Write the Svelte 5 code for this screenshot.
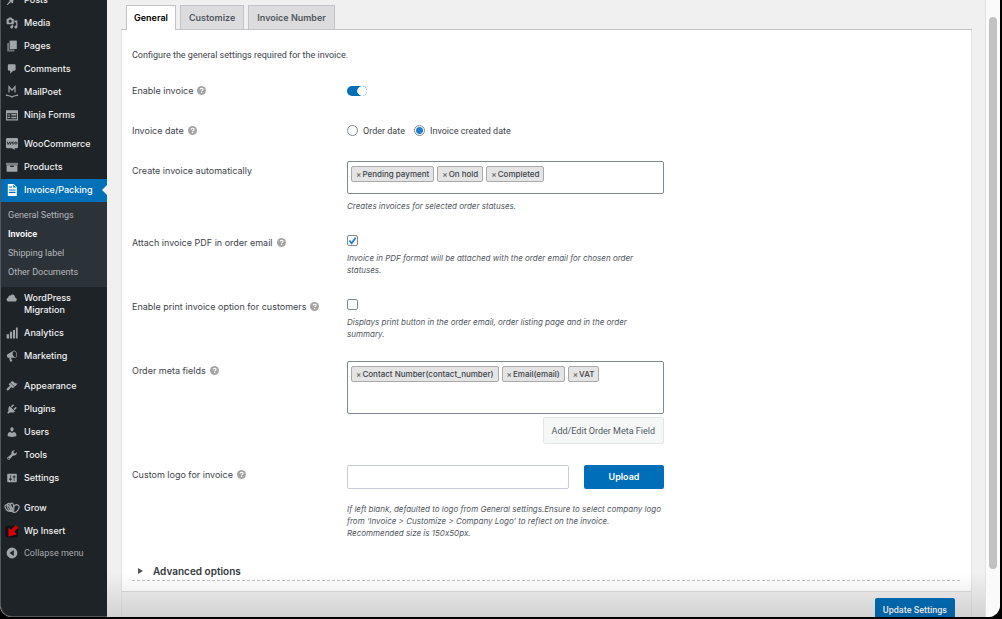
<script>
  const icons = {
    posts: 'M10.44 3.02l1.82-1.82 6.36 6.35-1.83 1.82c-1.05-.68-2.48-.57-3.41.36l-.75.75c-.92.93-1.04 2.35-.35 3.41l-1.83 1.82-2.41-2.41-2.8 2.79c-.42.42-3.38 2.71-3.8 2.29s1.86-3.39 2.28-3.81l2.79-2.79L4.1 9.36l1.83-1.82c1.05.69 2.48.57 3.4-.36l.75-.75c.93-.92 1.05-2.35.36-3.41z',
    media: 'M13 11V4c0-.55-.45-1-1-1h-1.67L9 1H5L3.67 3H2c-.55 0-1 .45-1 1v7c0 .55.45 1 1 1h10c.55 0 1-.45 1-1zM7 4.5c1.38 0 2.5 1.12 2.5 2.5S8.38 9.5 7 9.5 4.5 8.38 4.5 7 5.62 4.5 7 4.5zM14 6h5v10.5c0 1.38-1.12 2.5-2.5 2.5S14 17.88 14 16.5s1.12-2.5 2.5-2.5c.17 0 .34.02.5.05V9h-3V6zm-4 8.05V13h2v3.5c0 1.38-1.12 2.5-2.5 2.5S7 17.88 7 16.5 8.12 14 9.5 14c.17 0 .34.02.5.05z',
    comments: 'M5 2h9c1.1 0 2 .9 2 2v7c0 1.1-.9 2-2 2h-2l-5 5v-5H5c-1.1 0-2-.9-2-2V4c0-1.1.9-2 2-2z',
    cloud: 'M14.9 9c1.8.2 3.1 1.7 3.1 3.5 0 1.9-1.6 3.5-3.5 3.5h-10C2.6 16 1 14.4 1 12.5 1 10.7 2.3 9.3 4.1 9 4 8.9 4 8.7 4 8.5 4 7.1 5.1 6 6.5 6c.3 0 .7.1.9.2C8.1 4.9 9.4 4 11 4c2.2 0 4 1.8 4 4 0 .4-.1.7-.1 1z',
    analytics: 'M1 12h4v7H1zM6.500 8h3.500v11H6.500zM11.500 5h3.500v14h-3.500zM16.500 1H19.500v18h-3z',
    marketing: 'M18.15 5.94c.46 1.62.38 3.22-.02 4.48-.42 1.28-1.26 2.18-2.3 2.48-.16.06-.26.06-.4.06-.06.02-.12.02-.18.02-.06.02-.14.02-.22.02h-6.8l2.22 5.5c.02.14-.06.26-.14.34-.08.1-.24.16-.34.16H6.95c-.1 0-.26-.06-.34-.16-.08-.08-.16-.2-.14-.34l-1-5.5H4.25l-.02-.02c-.5.06-1.08-.18-1.54-.62s-.88-1.08-1.06-1.88c-.24-.8-.2-1.56-.02-2.2.18-.62.58-1.08 1.06-1.3l.02-.02 9-5.4c.1-.06.18-.1.24-.16.06-.04.14-.08.24-.12.16-.08.28-.12.5-.18 1.04-.3 2.24.1 3.22.98s1.84 2.24 2.26 3.86zm-2.58 5.98h-.02c.4-.1.74-.34 1.04-.7.58-.7.86-1.76.86-3.04 0-.64-.1-1.3-.28-1.98-.34-1.36-1.02-2.5-1.78-3.24s-1.68-1.1-2.46-.88c-.82.22-1.4.96-1.7 2-.32 1.04-.28 2.36.06 3.72.38 1.36 1 2.5 1.8 3.24.78.74 1.62 1.1 2.48.88z',
    appearance: 'M14.48 11.06L7.41 3.99l1.5-1.5c.5-.56 2.3-.47 3.51.32 1.21.8 1.43 1.28 2.91 2.1 1.18.64 2.45 1.26 4.45.85zm-.71.71L6.7 4.7 4.93 6.47c-.39.39-.39 1.02 0 1.41l1.06 1.06c.39.39.39 1.03 0 1.42-.6.6-1.43 1.11-2.21 1.69-.35.26-.7.53-1.01.84C1.43 14.23.4 16.08 1.4 17.07c.99 1 2.84-.03 4.18-1.36.31-.31.58-.66.85-1.02.57-.78 1.08-1.61 1.69-2.21.39-.39 1.02-.39 1.41 0l1.06 1.06c.39.39 1.02.39 1.41 0z',
    plugins: 'M13.11 4.36L9.87 7.6 8 5.73l3.24-3.24c.35-.34 1.05-.2 1.56.32.52.51.66 1.21.31 1.55zm-8 1.77l.91-1.12 9.01 9.01-1.19.84c-.71.71-2.63 1.16-3.82 1.16H6.14L4.9 17.26c-.59.59-1.54.59-2.12 0-.59-.58-.59-1.53 0-2.12l1.24-1.24v-3.88c0-1.13.4-3.19 1.09-3.89zm7.26 3.97l3.24-3.24c.34-.35 1.04-.21 1.55.31.52.51.66 1.21.31 1.55l-3.24 3.25z',
    users: 'M10 9.25c-2.27 0-2.73-3.44-2.73-3.44C7 4.02 7.82 2 9.97 2c2.16 0 2.98 2.02 2.71 3.81 0 0-.41 3.44-2.68 3.44zm0 2.57L12.72 10c2.39 0 4.52 2.33 4.52 4.53v2.49s-3.65 1.13-7.24 1.13c-3.65 0-7.24-1.13-7.24-1.13v-2.49c0-2.25 1.94-4.48 4.47-4.48z',
    tools: 'M16.68 9.77c-1.34 1.34-3.3 1.67-4.95.99l-5.41 6.52c-.99.99-2.59.99-3.58 0s-.99-2.59 0-3.57l6.52-5.42c-.68-1.65-.35-3.61.99-4.95 1.28-1.28 3.12-1.62 4.72-1.06l-2.89 2.89 2.82 2.82 2.86-2.87c.53 1.58.18 3.39-1.08 4.65zM3.81 16.21c.4.39 1.04.39 1.43 0 .4-.4.4-1.04 0-1.43-.39-.4-1.03-.4-1.43 0-.39.39-.39 1.03 0 1.43z',
    settings: 'M18 16V4c0-.55-.45-1-1-1H3c-.55 0-1 .45-1 1v12c0 .55.45 1 1 1h14c.55 0 1-.45 1-1zM8 11h1c.55 0 1 .45 1 1s-.45 1-1 1H8v1.5c0 .28-.22.5-.5.5s-.5-.22-.5-.5V13H6c-.55 0-1-.45-1-1s.45-1 1-1h1V5.5c0-.28.22-.5.5-.5s.5.22.5.5V11zm5-2h-1c-.55 0-1-.45-1-1s.45-1 1-1h1V5.5c0-.28.22-.5.5-.5s.5.22.5.5V7h1c.55 0 1 .45 1 1s-.45 1-1 1h-1v5.5c0 .28-.22.5-.5.5s-.5-.22-.5-.5V9z',
    collapse: 'M10 1a9 9 0 1 0 0 18 9 9 0 0 0 0-18zM13 5v10L6 10z'
  };

  const groups = [
    [['posts', 'Posts'], ['media', 'Media'], ['pages', 'Pages'], ['comments', 'Comments'], ['mailpoet', 'MailPoet'], ['ninja', 'Ninja Forms']],
    [['woo', 'WooCommerce'], ['products', 'Products'], ['invoice', 'Invoice/Packing'], ['cloud', 'WordPress Migration'], ['analytics', 'Analytics'], ['marketing', 'Marketing']],
    [['appearance', 'Appearance'], ['plugins', 'Plugins'], ['users', 'Users'], ['tools', 'Tools'], ['settings', 'Settings']],
    [['grow', 'Grow'], ['insert', 'Wp Insert']]
  ];
  const submenu = ['General Settings', 'Invoice', 'Shipping label', 'Other Documents'];
  const tabs = ['General', 'Customize', 'Invoice Number'];

  let activeTab = $state('General');
  let enabled = $state(true);
  let dateType = $state('created');
  let attach = $state(true);
  let print = $state(false);
  let logo = $state('');
  let statuses = $state(['Pending payment', 'On hold', 'Completed']);
  let metaFields = $state(['Contact Number(contact_number)', 'Email(email)', 'VAT']);
</script>

{#snippet icon(name)}
  <svg class="icon" viewBox="0 0 20 20" aria-hidden="true">
    {#if name === 'pages'}
      <path d="M6 1h12v14H6z" /><path opacity=".65" d="M2 5h3v11h9v3H2z" />
    {:else if name === 'mailpoet'}
      <path class="line" d="M5 11V1l5 6 5-6v10" />
      <path class="line" d="M0 14.500c3 2.500 7 1 10 4 3-3 7-1.500 10-4" />
    {:else if name === 'ninja'}
      <path fill-rule="evenodd" d="M0 2h20v17H0zM2 7v10h16V7z" />
      <path d="M3 9h4v2H3zM3 13h4v2H3zM9 8.500h8v2.500H9zM9 13h8v2.500H9z" />
    {:else if name === 'woo'}
      <path d="M2 0h16q2 0 2 2v13q0 2-2 2h-4l1 3-5-3H2q-2 0-2-2V2q0-2 2-2z" />
      <path class="cut" d="M2 6l1.500 5L6 6.500 7.500 11 9 6M12 6.500a1.500 2 0 1 0 .1 0M16.500 6.500a1.500 2 0 1 0 .1 0" />
    {:else if name === 'products'}
      <path opacity=".7" d="M0 3h20v4H0z" />
      <path fill-rule="evenodd" d="M1 7h18v11H1zM7 8v2h6V8z" />
    {:else if name === 'invoice'}
      <path fill-rule="evenodd" d="M3 0h10l5 5v15H3zM12 1v5h5zM5 4v2h5V4zM5 9v2h11V9zM5 13v2h11v-2z" />
    {:else if name === 'grow'}
      <g class="line">
        <ellipse cx="3" cy="10" rx="3.500" ry="6" transform="rotate(-35 3 10)" />
        <ellipse cx="6" cy="9" rx="3" ry="7" transform="rotate(-22 6 9)" />
        <ellipse cx="10" cy="9" rx="3" ry="7" transform="rotate(-5 10 9)" />
        <ellipse cx="16" cy="11" rx="4.500" ry="7" transform="rotate(38 16 11)" />
      </g>
    {:else if name === 'insert'}
      <rect class="tile" x="0" y="2" width="19" height="18" rx="2" />
      <path class="red" d="M16 0l5 4-7 7 4 5-14 3V5l5 3z" />
    {:else}
      <path fill-rule="evenodd" d={icons[name]} />
    {/if}
  </svg>
{/snippet}

{#snippet help()}
  <svg class="help" viewBox="0 0 20 20" role="img" aria-label="Help">
    <circle cx="10" cy="10" r="10" />
    <path d="M7 8c0-4 6.500-4 6.500-.5 0 2.500-3.300 2.200-3.300 4.500M10.200 13.500v2.500" />
  </svg>
{/snippet}

{#snippet chips(list, remove)}
  {#each list as item}
    <li class="chip"><button type="button" aria-label="Remove {item}" onclick={() => remove(item)}>×</button>{item}</li>
  {/each}
{/snippet}

<div class="window">
  <nav class="sidebar" aria-label="Admin menu">
    {#each groups as group}
      <ul class="menu">
        {#each group as [name, label]}
          <li>
            <a href="#{name}" class="item" class:current={name === 'invoice'}>
              {@render icon(name)}<span>{label}</span>
            </a>
            {#if name === 'invoice'}
              <ul class="submenu">
                {#each submenu as sub}
                  <li><a href="#{name}-sub" class:selected={sub === 'Invoice'}>{sub}</a></li>
                {/each}
              </ul>
            {/if}
          </li>
        {/each}
      </ul>
    {/each}
    <button type="button" class="item collapse">{@render icon('collapse')}<span>Collapse menu</span></button>
  </nav>

  <main>
    <div class="tabs" role="tablist">
      {#each tabs as tab}
        <button type="button" role="tab" aria-selected={tab === activeTab} class:active={tab === activeTab} onclick={() => (activeTab = tab)}>{tab}</button>
      {/each}
    </div>

    <form class="panel" onsubmit={(e) => e.preventDefault()}>
      <div class="body">
        <p class="intro">Configure the general settings required for the invoice.</p>

        <div class="row">
          <div class="label"><label for="enable">Enable invoice</label>{@render help()}</div>
          <div class="field"><input id="enable" class="toggle" type="checkbox" bind:checked={enabled} /></div>
        </div>

        <div class="row">
          <div class="label"><span id="date-label">Invoice date</span>{@render help()}</div>
          <div class="field radios" role="radiogroup" aria-labelledby="date-label">
            <label><input type="radio" name="date" value="order" bind:group={dateType} />Order date</label>
            <label><input type="radio" name="date" value="created" bind:group={dateType} />Invoice created date</label>
          </div>
        </div>

        <div class="row">
          <div class="label"><span id="status-label">Create invoice automatically</span></div>
          <div class="field">
            <ul class="tagbox" aria-labelledby="status-label">
              {@render chips(statuses, (s) => (statuses = statuses.filter((x) => x !== s)))}
            </ul>
            <p class="hint">Creates invoices for selected order statuses.</p>
          </div>
        </div>

        <div class="row">
          <div class="label"><label for="attach">Attach invoice PDF in order email</label>{@render help()}</div>
          <div class="field">
            <input id="attach" class="check" type="checkbox" bind:checked={attach} />
            <p class="hint">Invoice in PDF format will be attached with the order email for chosen order statuses.</p>
          </div>
        </div>

        <div class="row">
          <div class="label"><label for="print">Enable print invoice option for customers</label>{@render help()}</div>
          <div class="field">
            <input id="print" class="check" type="checkbox" bind:checked={print} />
            <p class="hint">Displays print button in the order email, order listing page and in the order summary.</p>
          </div>
        </div>

        <div class="row">
          <div class="label"><span id="meta-label">Order meta fields</span>{@render help()}</div>
          <div class="field">
            <ul class="tagbox tall" aria-labelledby="meta-label">
              {@render chips(metaFields, (s) => (metaFields = metaFields.filter((x) => x !== s)))}
            </ul>
            <button type="button" class="secondary">Add/Edit Order Meta Field</button>
          </div>
        </div>

        <div class="row">
          <div class="label"><label for="logo">Custom logo for invoice</label>{@render help()}</div>
          <div class="field">
            <div class="upload">
              <input id="logo" type="text" bind:value={logo} />
              <button type="button" class="primary">Upload</button>
            </div>
            <p class="hint logo-hint">If left blank, defaulted to logo from General settings.Ensure to select company logo from ‘Invoice &gt; Customize &gt; Company Logo’ to reflect on the invoice. Recommended size is 150x50px.</p>
          </div>
        </div>

        <button type="button" class="advanced">
          <svg viewBox="0 0 5 6" aria-hidden="true"><path d="M0 0l5 3-5 3z" /></svg>Advanced options
        </button>
      </div>
      <footer><button type="submit" class="primary">Update Settings</button></footer>
    </form>
  </main>

  <div class="track"><div class="thumb"></div></div>
</div>

<style>
  :global(body) {
    background: #000;
    overflow: hidden;
  }
  * {
    box-sizing: border-box;
  }
  ul, p {
    margin: 0;
    padding: 0;
    list-style: none;
  }
  button, input {
    font: inherit;
    margin: 0;
  }
  .window {
    display: grid;
    grid-template-columns: 107px 1fr 15px;
    grid-template-rows: minmax(0, 1fr);
    height: calc(100vh - 2px);
    margin-right: 2px;
    overflow: hidden;
    border-radius: 0 0 12px 12px;
    background: #f0f0f1;
    color: #3c434a;
    font: 9px/12px Inter, "Liberation Sans", sans-serif;
    font-variant-ligatures: no-contextual;
  }
  .intro, .radios, .secondary, .submenu, .collapse, footer {
    font-family: Roboto, "Liberation Sans", sans-serif;
  }
  .sidebar {
    margin-top: -11px;
    border: 1px solid #50575e;
    border-width: 0 0 1px 1px;
    border-radius: 0 0 0 12px;
    background: #1d2327;
    font-weight: 500;
  }
  .menu {
    margin-bottom: 7px;
  }
  .menu:first-child {
    margin-bottom: 6px;
  }
  .menu:last-of-type {
    margin-bottom: 0;
  }
  .item {
    position: relative;
    display: flex;
    align-items: flex-start;
    gap: 6px;
    width: 100%;
    padding: 5px 20px 6px 5px;
    border: 0;
    background: none;
    color: #f0f0f1;
    text-align: left;
    text-decoration: none;
  }
  .current {
    background: #0071b8;
    color: #fff;
    padding-right: 0;
  }
  .current::after {
    content: "";
    position: absolute;
    right: 0;
    top: 6px;
    border: 5px solid transparent;
    border-right-color: #f0f0f1;
    border-left: 0;
  }
  .collapse {
    padding-top: 4px;
    color: #a7aaad;
    font-weight: 400;
    white-space: nowrap;
  }
  .icon {
    flex: none;
    width: 12px;
    height: 12px;
    fill: #a0a5aa;
    overflow: visible;
  }
  .current .icon {
    fill: #fff;
  }
  .line {
    fill: none;
    stroke: #a0a5aa;
    stroke-width: 2;
  }
  .cut {
    fill: none;
    stroke: #1d2327;
    stroke-width: 1.500;
  }
  .tile {
    fill: #111518;
    stroke: #0a0c0e;
  }
  .red {
    fill: #d40000;
  }
  .submenu {
    padding: 4px 0 5px 7px;
    background: #2c3338;
    line-height: 19px;
    font-weight: 400;
  }
  .submenu a {
    color: #b4b9be;
    text-decoration: none;
  }
  .submenu .selected {
    color: #fff;
    font-weight: 600;
  }
  main {
    position: relative;
    display: flex;
    flex-direction: column;
    min-width: 0;
    padding: 5px 13px 0 14px;
  }
  main::after {
    content: "";
    position: absolute;
    inset: auto 0 0;
    height: 44px;
    background: linear-gradient(transparent, rgba(0, 0, 0, 0.12));
    pointer-events: none;
  }
  .tabs {
    display: flex;
    gap: 4px;
    padding-left: 5px;
    border-bottom: 1px solid #c3c4c7;
  }
  .tabs button {
    height: 24px;
    padding: 0 8px;
    border: 1px solid #c3c4c7;
    border-bottom: 0;
    background: #dcdcde;
    color: #50575e;
    font-weight: 600;
  }
  .tabs .active {
    height: 25px;
    margin-bottom: -1px;
    padding: 0 7px;
    background: #fff;
    color: #000;
  }
  .panel {
    flex: 1;
    display: flex;
    flex-direction: column;
    border: 1px solid #e2e4e7;
    border-width: 0 1px;
    background: #fff;
  }
  .body {
    padding: 19px 11px 10px 10px;
  }
  .intro {
    margin-bottom: 10px;
  }
  .row {
    display: grid;
    grid-template-columns: 215px minmax(0, 317px);
  }
  .label {
    display: flex;
    gap: 4px;
    padding: 14px 0;
  }
  .field {
    padding: 10px 0 11px;
  }
  .help {
    width: 9px;
    height: 9px;
    margin-top: 1px;
    fill: #a5a5a5;
  }
  .help path {
    fill: none;
    stroke: #fff;
    stroke-width: 2.500;
  }
  .toggle {
    appearance: none;
    display: block;
    width: 20px;
    height: 10px;
    margin-top: 5px;
    border-radius: 5px;
    background: radial-gradient(circle 4px at 5px 50%, #fff 96%, #a7aaad);
  }
  .toggle:checked {
    background: radial-gradient(circle 5px at 15px 50%, #fff 90%, #0071b8);
  }
  .radios {
    display: flex;
    gap: 9px;
    padding: 14px 0 0;
  }
  .radios label {
    display: flex;
    gap: 5px;
  }
  .radios input {
    appearance: none;
    width: 11px;
    height: 11px;
    border: 1px solid #7e8993;
    border-radius: 50%;
  }
  .radios input:checked {
    background: radial-gradient(circle, #1e7fcb 3px, #fff 4px);
  }
  .tagbox {
    display: flex;
    flex-wrap: wrap;
    align-content: flex-start;
    gap: 3px;
    min-height: 33px;
    padding: 4px 3px;
    border: 1px solid #7e8993;
    border-radius: 2px;
  }
  .tall {
    min-height: 53px;
  }
  .chip {
    display: flex;
    align-items: center;
    height: 16px;
    padding: 0 4px;
    border: 1px solid #aaa;
    border-radius: 2px;
    background: #e4e4e4;
    font-size: 8px;
    font-weight: 500;
  }
  .chip button {
    padding: 0;
    margin-right: 1px;
    border: 0;
    background: none;
    color: #777;
    font-weight: 600;
  }
  .hint {
    margin-top: 6px;
    color: #50575e;
    font-size: 8px;
    font-style: italic;
  }
  .check {
    appearance: none;
    display: block;
    width: 11px;
    height: 11px;
    margin-top: 2px;
    border: 1px solid #7e8993;
    border-radius: 2px;
    background: #fff;
  }
  .check:checked {
    background: #fff url("data:image/svg+xml,%3Csvg xmlns='http://www.w3.org/2000/svg' viewBox='0 0 10 10'%3E%3Cpath d='M1.500 5l2.500 3L8.500 2' fill='none' stroke='%231e7fcb' stroke-width='2'/%3E%3C/svg%3E");
  }
  .secondary {
    display: block;
    height: 27px;
    margin: 3px 0 0 auto;
    padding: 0 8px;
    border: 1px solid #e2e4e7;
    border-radius: 2px;
    background: #f6f7f7;
    color: #50575e;
  }
  .upload {
    display: flex;
    gap: 15px;
  }
  .upload input {
    flex: 1;
    min-width: 0;
    height: 24px;
    padding: 0 6px;
    border: 1px solid #c8ccd8;
    border-radius: 2px;
  }
  .primary {
    height: 24px;
    padding: 0 8px;
    border: 0;
    border-radius: 2px;
    background: #006eb8;
    color: #fff;
    font-weight: 500;
  }
  .upload .primary {
    width: 80px;
    font-weight: 600;
  }
  .logo-hint {
    margin-top: 14px;
  }
  .advanced {
    display: flex;
    align-items: center;
    gap: 10px;
    width: 100%;
    margin-top: 15px;
    padding: 0 6px 3px;
    border: 0;
    border-bottom: 1px dashed #c3c4c7;
    background: none;
    color: #32373c;
    font-size: 10px;
    font-weight: 600;
  }
  .advanced svg {
    width: 5px;
    height: 6px;
    fill: #555;
  }
  footer {
    flex: 1;
    display: flex;
    justify-content: flex-end;
    align-items: flex-start;
    padding: 6px 16px 0;
    border-top: 1px solid #dcdcde;
    background: #f0f0f1;
  }
  .track {
    padding: 17px 3px 48px;
    border-left: 1px solid #e2e2e2;
    background: #fafafa;
  }
  .thumb {
    width: 8px;
    height: 100%;
    border-radius: 4px;
    background: #c1c1c1;
  }
</style>
